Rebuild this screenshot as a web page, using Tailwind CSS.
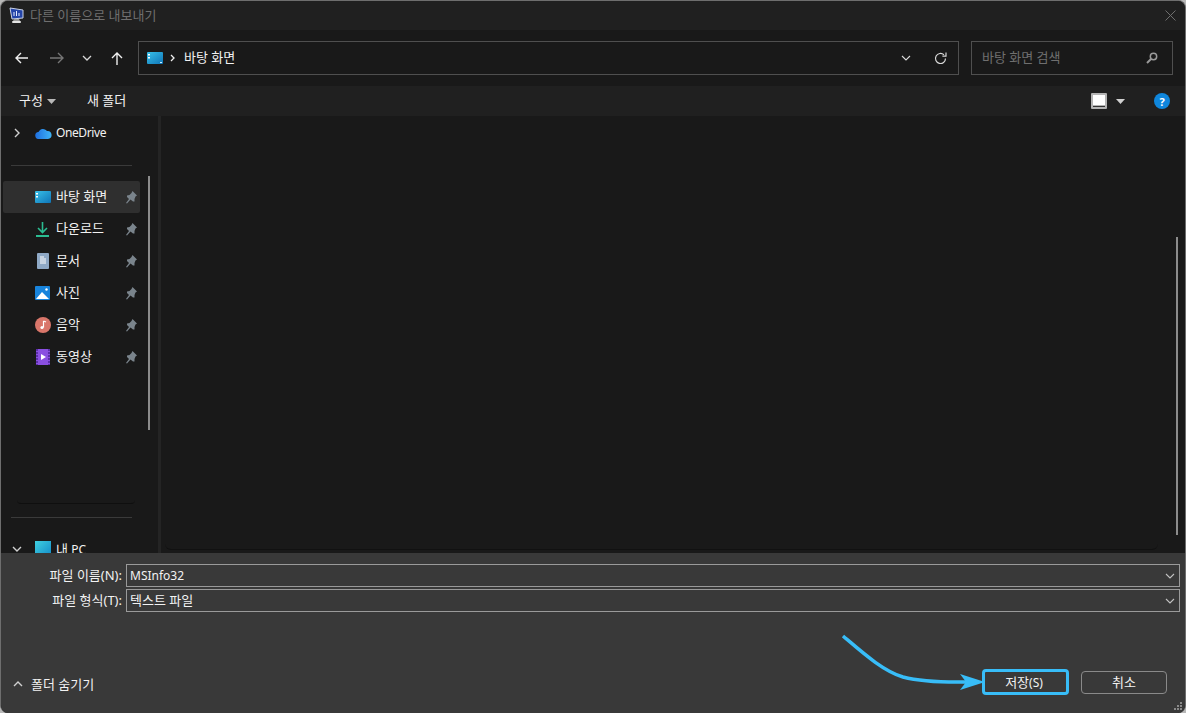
<!DOCTYPE html>
<html lang="ko">
<head>
<meta charset="UTF-8">
<title>다른 이름으로 내보내기</title>
<script src="https://cdn.jsdelivr.net/npm/@tailwindcss/browser@4"></script>
</head>
<body class="bg-[#b8b8b8] overflow-hidden font-['Noto_Sans','Noto_Sans_CJK_KR',sans-serif] text-[13px] leading-none text-[#f2f2f2]">

<div class="relative w-[1186px] h-[713px] flex flex-col overflow-hidden rounded-[8px] border border-[#6e6e6e] border-b-0 bg-[#191919]">

  <!-- title bar -->
  <div class="h-[29px] shrink-0 bg-[#202020] flex items-center pl-[8px] pr-[10px]">
    <svg width="15" height="17" viewBox="0 0 15 17" class="mr-[6px]">
      <path d="M1 1l13 2v8l-11 1z" fill="#2444a8" stroke="#c9d2e6" stroke-width="1"/>
      <path d="M5 9V5M7.500 9V4M10 9V6" stroke="#e6ecff" stroke-width="1"/>
      <path d="M5 12h5l1 2H4z" fill="#9a9a9a"/>
      <rect x="3" y="14" width="9" height="2" rx="1" fill="#e5e5e5"/>
    </svg>
    <span class="text-[#6f6f6f]">다른 이름으로 내보내기</span>
    <svg width="11" height="11" viewBox="0 0 11 11" class="ml-auto mr-[-1px]"><path d="M.5.5l10 10M10.500.5l-10 10" stroke="#6f6f6f" stroke-width="1"/></svg>
  </div>

  <!-- address row -->
  <div class="h-[56px] shrink-0 bg-[#191919] flex items-center pl-[13px] pr-[12px]">
    <svg width="16" height="14" viewBox="0 0 16 14" class="mr-[19px] shrink-0"><path d="M14 7H2M7 2 2 7l5 5" fill="none" stroke="#f0f0f0" stroke-width="1.400"/></svg>
    <svg width="16" height="14" viewBox="0 0 16 14" class="mr-[17px] shrink-0"><path d="M1 7h13M9 2l5 5-5 5" fill="none" stroke="#767676" stroke-width="1.400"/></svg>
    <svg width="10" height="6" viewBox="0 0 10 6" class="mr-[18px] shrink-0"><path d="M1 1l4 4 4-4" fill="none" stroke="#d8d8d8" stroke-width="1.300"/></svg>
    <svg width="14" height="15" viewBox="0 0 14 15" class="mr-[14px] shrink-0"><path d="M7 14V2M2 7l5-5 5 5" fill="none" stroke="#f0f0f0" stroke-width="1.400"/></svg>
    <div class="w-[821px] h-[34px] shrink-0 border border-[#4f4f4f] flex items-center pl-[8px] pr-[11px]">
      <svg width="16" height="13" viewBox="0 0 16 13" class="mr-[7px]"><defs><linearGradient id="d1" x1="0" y1="0" x2="1" y2="1"><stop offset="0" stop-color="#38c0e8"/><stop offset="1" stop-color="#0f75b8"/></linearGradient></defs><rect width="16" height="12" rx="1" fill="url(#d1)"/><rect x="1" y="2" width="2" height="1.500" fill="#fff"/><rect x="1" y="5" width="2" height="1.500" fill="#fff"/><rect x="13" y="10" width="2" height="1" fill="#cfefff"/></svg>
      <svg width="5" height="8" viewBox="0 0 5 8" class="mr-[9px]"><path d="M1 1l3 3-3 3" fill="none" stroke="#f0f0f0" stroke-width="1.300"/></svg>
      <span class="mb-[2px]">바탕 화면</span>
      <svg width="10" height="6" viewBox="0 0 10 6" class="ml-auto mr-[23px]"><path d="M1 1l4 4 4-4" fill="none" stroke="#d8d8d8" stroke-width="1.100"/></svg>
      <svg width="13" height="13" viewBox="0 0 13 13"><path d="M11.500 6.500a5 5 0 1 1-1.600-3.700" fill="none" stroke="#d8d8d8" stroke-width="1.200"/><path d="M12 .5v3.600H8.400" fill="none" stroke="#d8d8d8" stroke-width="1.200"/></svg>
    </div>
    <div class="ml-[12px] w-[202px] h-[34px] shrink-0 border border-[#4f4f4f] flex items-center pl-[10px] pr-[14px] text-[#6f6f6f]">
      <span class="mb-[2px]">바탕 화면 검색</span>
      <svg width="12" height="12" viewBox="0 0 12 12" class="ml-auto"><circle cx="7.500" cy="4.500" r="3.200" fill="none" stroke="#9a9a9a" stroke-width="1.500"/><path d="M5 7l-4 4" stroke="#9a9a9a" stroke-width="2"/></svg>
    </div>
  </div>

  <!-- command bar -->
  <div class="h-[30px] shrink-0 bg-[#202020] flex items-center pl-[18px] pr-[15px]">
    <span class="mb-[2px]">구성</span>
    <svg width="9" height="5" viewBox="0 0 9 5" class="ml-[4px] mr-[31px]"><path d="M0 0h9L4.500 5z" fill="#b8b8b8"/></svg>
    <span class="mb-[2px]">새 폴더</span>
    <svg width="16" height="16" viewBox="0 0 16 16" class="ml-auto mr-[9px]"><rect width="16" height="16" rx="1" fill="#b4b4b4"/><rect x="2" y="2" width="12" height="10" fill="#fff"/><rect x="2" y="13" width="12" height="1" fill="#333"/></svg>
    <svg width="9" height="5" viewBox="0 0 9 5" class="mr-[29px]"><path d="M0 0h9L4.500 5z" fill="#d0d0d0"/></svg>
    <div class="w-[16px] h-[16px] rounded-full bg-[#0f86dc] flex items-center justify-center text-white text-[11px] font-bold">?</div>
  </div>

  <!-- panes -->
  <div class="flex-1 min-h-0 flex overflow-hidden">
    <div class="relative w-[157px] shrink-0 pl-[2px] pt-[1px] overflow-hidden">
      <div class="h-[32px] flex items-center"><svg width="6" height="10" viewBox="0 0 6 10" class="ml-[11px] mr-[15px]"><path d="M1 1l4 4-4 4" fill="none" stroke="#d0d0d0" stroke-width="1.400"/></svg><svg width="17" height="11" viewBox="0 0 17 11" class="mr-[4px]"><defs><linearGradient id="c1" x1="0" y1="0" x2="1" y2="0"><stop offset="0" stop-color="#1f6fe0"/><stop offset="1" stop-color="#3fb4f5"/></linearGradient></defs><path d="M4 11a3.500 3.500 0 0 1-.5-7A5 5 0 0 1 12 3a4 4 0 0 1 1 8z" fill="url(#c1)"/></svg><span class="text-[12px] tracking-[-0.4px]">OneDrive</span></div>
      <div class="ml-[8px] w-[121px] h-px bg-[#3a3a3a] mt-[16px] mb-[15px]"></div>

      <div class="w-[137px] h-[32px] flex items-center bg-[#2f2f2f] rounded-[2px]">
        <span class="w-[48px] shrink-0 flex justify-end"><svg width="16" height="13" viewBox="0 0 16 13"><defs><linearGradient id="d2" x1="0" y1="0" x2="1" y2="1"><stop offset="0" stop-color="#38c0e8"/><stop offset="1" stop-color="#0f75b8"/></linearGradient></defs><rect width="16" height="12" rx="1" fill="url(#d2)"/><rect x="1" y="2" width="2" height="1.500" fill="#fff"/><rect x="1" y="5" width="2" height="1.500" fill="#fff"/></svg></span>
        <span class="ml-[5px] mb-[2px]">바탕 화면</span>
        <svg width="11" height="13" viewBox="0 0 11 13" class="ml-auto mr-[3px]"><path d="M6.500 0 11 4.500 9.500 5.500 8.500 8v2.500H7L4.500 8.500 1 12.500l-1-.5L3 8 1 6V4.500l2.500-.5L5.500 2z" fill="#7a848c"/></svg>
      </div>
      <div class="w-[137px] h-[32px] flex items-center">
        <span class="w-[48px] shrink-0 flex justify-end pr-[2px]"><svg width="13" height="16" viewBox="0 0 13 16"><path d="M6.500 1v10M2 7l4.500 4.500L11 7" fill="none" stroke="#2bbd92" stroke-width="1.600"/><rect x="0" y="14" width="13" height="2" fill="#2bbd92"/></svg></span>
        <span class="ml-[5px] mb-[2px]">다운로드</span>
        <svg width="11" height="13" viewBox="0 0 11 13" class="ml-auto mr-[3px]"><path d="M6.500 0 11 4.500 9.500 5.500 8.500 8v2.500H7L4.500 8.500 1 12.500l-1-.5L3 8 1 6V4.500l2.500-.5L5.500 2z" fill="#7a848c"/></svg>
      </div>
      <div class="w-[137px] h-[32px] flex items-center">
        <span class="w-[48px] shrink-0 flex justify-end pr-[2px]"><svg width="12" height="16" viewBox="0 0 12 16"><rect width="12" height="16" rx="1" fill="#8fa9c6"/><path d="M3 4h4M3 6h6M3 8h6M3 10h6" stroke="#fff" stroke-width="1"/></svg></span>
        <span class="ml-[5px] mb-[2px]">문서</span>
        <svg width="11" height="13" viewBox="0 0 11 13" class="ml-auto mr-[3px]"><path d="M6.500 0 11 4.500 9.500 5.500 8.500 8v2.500H7L4.500 8.500 1 12.500l-1-.5L3 8 1 6V4.500l2.500-.5L5.500 2z" fill="#7a848c"/></svg>
      </div>
      <div class="w-[137px] h-[32px] flex items-center">
        <span class="w-[48px] shrink-0 flex justify-end pr-[1px]"><svg width="15" height="14" viewBox="0 0 15 14"><rect width="15" height="14" rx="1" fill="#1884dc"/><path d="M1 13l6-7 7 7z" fill="#fff"/><circle cx="11.500" cy="3.500" r="1.200" fill="#fff"/></svg></span>
        <span class="ml-[5px] mb-[2px]">사진</span>
        <svg width="11" height="13" viewBox="0 0 11 13" class="ml-auto mr-[3px]"><path d="M6.500 0 11 4.500 9.500 5.500 8.500 8v2.500H7L4.500 8.500 1 12.500l-1-.5L3 8 1 6V4.500l2.500-.5L5.500 2z" fill="#7a848c"/></svg>
      </div>
      <div class="w-[137px] h-[32px] flex items-center">
        <span class="w-[48px] shrink-0 flex justify-end"><svg width="16" height="16" viewBox="0 0 16 16"><circle cx="8" cy="8" r="8" fill="#d9766a"/><path d="M8.500 4v6.500" stroke="#fff" stroke-width="1.200"/><path d="M8.500 4l2.500 1" stroke="#fff" stroke-width="1.200"/><circle cx="7" cy="10.500" r="1.600" fill="#fff"/></svg></span>
        <span class="ml-[5px] mb-[2px]">음악</span>
        <svg width="11" height="13" viewBox="0 0 11 13" class="ml-auto mr-[3px]"><path d="M6.500 0 11 4.500 9.500 5.500 8.500 8v2.500H7L4.500 8.500 1 12.500l-1-.5L3 8 1 6V4.500l2.500-.5L5.500 2z" fill="#7a848c"/></svg>
      </div>
      <div class="w-[137px] h-[32px] flex items-center">
        <span class="w-[48px] shrink-0 flex justify-end pr-[1px]"><svg width="14" height="16" viewBox="0 0 14 16"><rect width="14" height="16" rx="1" fill="#8a4fe0"/><path d="M1 0v16M13 0v16" stroke="#5a2ea8" stroke-width="2" stroke-dasharray="2 1"/><path d="M5 5l5 3-5 3z" fill="#fff"/></svg></span>
        <span class="ml-[5px] mb-[2px]">동영상</span>
        <svg width="11" height="13" viewBox="0 0 11 13" class="ml-auto mr-[3px]"><path d="M6.500 0 11 4.500 9.500 5.500 8.500 8v2.500H7L4.500 8.500 1 12.500l-1-.5L3 8 1 6V4.500l2.500-.5L5.500 2z" fill="#7a848c"/></svg>
      </div>

      <div class="ml-[14px] w-[118px] h-[4px] mt-[127px] rounded-b-[6px] border-b border-[#0f0f0f]"></div>
      <div class="ml-[8px] w-[121px] h-px bg-[#3a3a3a] mt-[13px] mb-[15px]"></div>
      <div class="h-[32px] flex items-center"><svg width="10" height="6" viewBox="0 0 10 6" class="ml-[9px] mr-[13px]"><path d="M1 1l4 4 4-4" fill="none" stroke="#d0d0d0" stroke-width="1.400"/></svg><svg width="17" height="16" viewBox="0 0 17 16" class="mr-[4px]"><defs><linearGradient id="d3" x1="0" y1="0" x2="1" y2="1"><stop offset="0" stop-color="#3fd0e0"/><stop offset="1" stop-color="#1289c8"/></linearGradient></defs><rect width="16" height="16" fill="url(#d3)"/></svg><span>내 <span class="text-[12px]">PC</span></span></div>

      <!-- scrollbar -->
      <div class="absolute left-[147px] top-[60px] w-[2px] h-[254px] bg-[#8c8c8c]"></div>
    </div>

    <div class="w-[3px] shrink-0 bg-[#242424]"></div>

    <div class="relative flex-1 min-w-0">
      <div class="ml-[4px] w-[993px] h-[434px] rounded-b-[6px] border-b border-[#111111]"></div>
      <div class="absolute left-[1015px] top-[121px] w-[2px] h-[298px] bg-[#8c8c8c]"></div>
    </div>
  </div>

  <!-- bottom panel -->
  <div class="h-[160px] shrink-0 bg-[#393939] flex flex-col">
    <div class="pt-[11px] pl-[125px] pr-[5px] flex flex-col gap-[2px]">
      <div class="relative h-[23px] border border-[#9a9a9a] flex items-center pl-[3px] pr-[4px]">
        <span class="absolute right-[100%] mr-[5px] whitespace-nowrap">파일 이름(N):</span>
        <span class="text-[12px]">MSInfo32</span>
        <svg width="10" height="6" viewBox="0 0 10 6" class="ml-auto"><path d="M1 1l4 4 4-4" fill="none" stroke="#c0c0c0" stroke-width="1.100"/></svg>
      </div>
      <div class="relative h-[23px] border border-[#9a9a9a] flex items-center pl-[3px] pr-[4px]">
        <span class="absolute right-[100%] mr-[5px] whitespace-nowrap">파일 형식(T):</span>
        <span>텍스트 파일</span>
        <svg width="10" height="6" viewBox="0 0 10 6" class="ml-auto"><path d="M1 1l4 4 4-4" fill="none" stroke="#c0c0c0" stroke-width="1.100"/></svg>
      </div>
    </div>
    <div class="mt-auto mb-[18px] pl-[12px] pr-[18px] flex items-center">
      <svg width="10" height="6" viewBox="0 0 10 6" class="mr-[8px] mt-[4px]"><path d="M1 5l4-4 4 4" fill="none" stroke="#d0d0d0" stroke-width="1.400"/></svg>
      <span class="mt-[4px]">폴더 숨기기</span>
      <button class="ml-auto w-[87px] h-[26px] pr-[3px] rounded-[4px] border-[3px] border-[#38bdf8] text-[#f2f2f2]">저장<span class="text-[12px]">(S)</span></button>
      <button class="ml-[12px] w-[86px] h-[23px] rounded-[4px] border border-[#8a8a8a] text-[#f2f2f2]">취소</button>
    </div>
  </div>

  <!-- annotation arrow -->
  <svg class="absolute left-[0px] top-[0px] pointer-events-none" width="1186" height="713" viewBox="0 0 1186 713">
    <path d="M842 635C862 652 882 670 902 676C925 682 950 681 966 681" fill="none" stroke="#38bdf8" stroke-width="3.500"/>
    <path d="M984 681L959 673L965 681L959 689Z" fill="#38bdf8"/>
  </svg>

  <!-- resize grip -->
  <svg class="absolute right-[2px] bottom-[2px]" width="9" height="9" viewBox="0 0 9 9"><path d="M6 0h2v2H6zM3 3h2v2H3zM6 3h2v2H6zM0 6h2v2H0zM3 6h2v2H3zM6 6h2v2H6z" fill="#8a8a8a"/></svg>
</div>

</body>
</html>
